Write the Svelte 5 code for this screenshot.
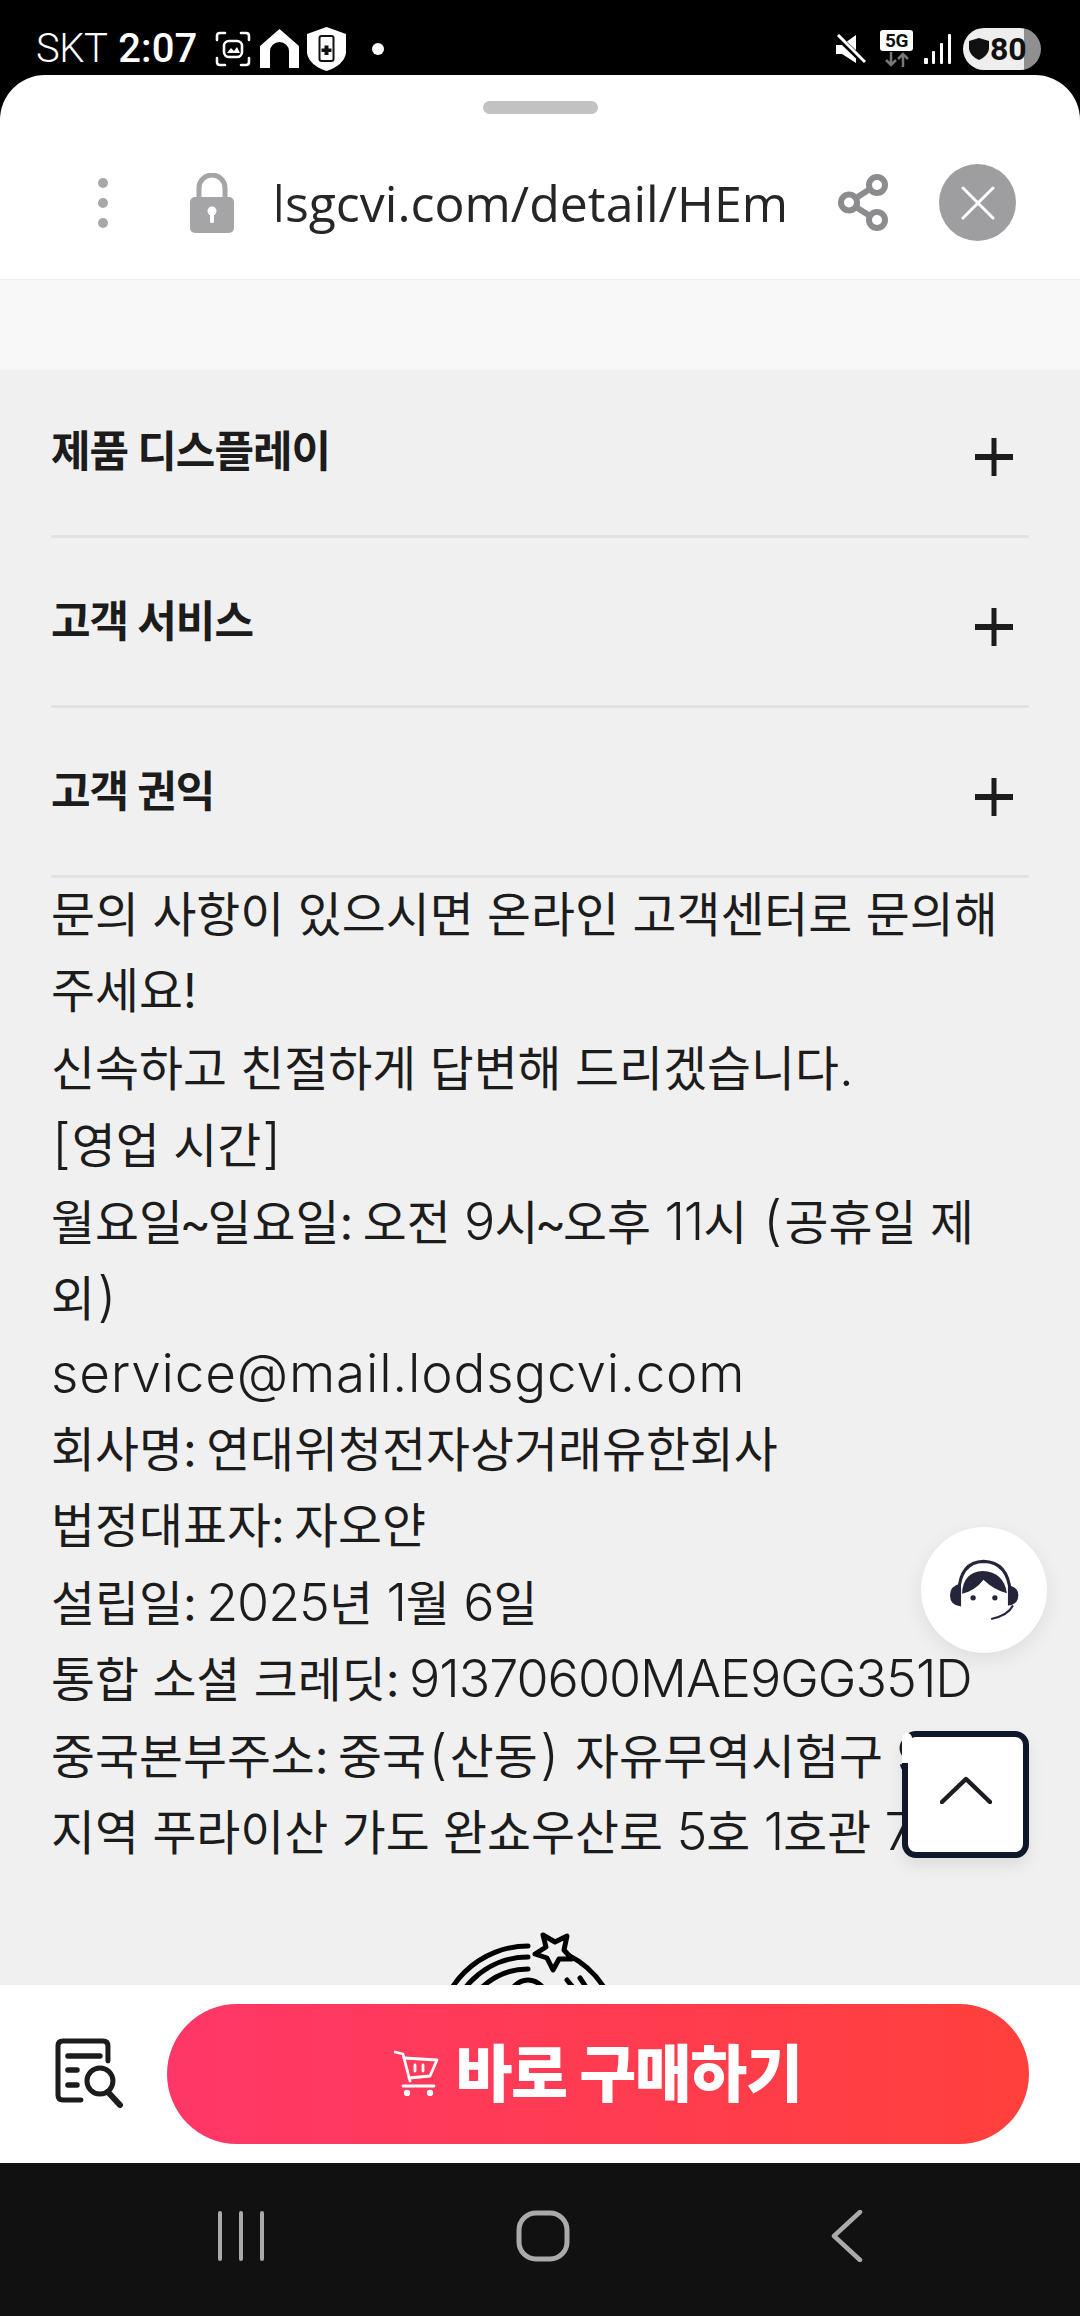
<script lang="ts">
	const sections = ['제품 디스플레이', '고객 서비스', '고객 권익'];

	const lines = [
		'문의 사항이 있으시면 온라인 고객센터로 문의해',
		'주세요!',
		'신속하고 친절하게 답변해 드리겠습니다.',
		'[영업 시간]',
		'월요일~일요일: 오전 9시~오후 11시 (공휴일 제',
		'외)',
		'service@mail.lodsgcvi.com',
		'회사명: 연대위청전자상거래유한회사',
		'법정대표자: 자오얀',
		'설립일: 2025년 1월 6일',
		'통합 소셜 크레딧: 91370600MAE9GG351D',
		'중국본부주소: 중국(산동) 자유무역시험구 9',
		'지역 푸라이산 가도 완쇼우산로 5호 1호관 7'
	];

	// latin runs and punctuation are set apart from the hangul, like the page's font pairing
	const split = (line: string) => line.split(/([A-Za-z0-9@.]+|[()\[\]~:])/).filter(Boolean);
	const kindOf = (part: string) => {
		if (part === ':') return 'colon';
		if (part === '~') return 'tilde';
		if (part === '(' || part === ')') return 'paren';
		if (part === '[' || part === ']') return 'bracket';
		if (/[a-z]/.test(part)) return 'latin word';
		if (/^[A-Z0-9@.]+$/.test(part)) return 'latin';
		return '';
	};
</script>

<div class="page">
	<header class="status">
		<span class="carrier">SKT</span>
		<span class="time">2:07</span>
		<svg class="ic-shot" viewBox="0 0 36 36" width="36" height="36" fill="none" stroke="#fff" stroke-width="2.6" stroke-linecap="round">
			<path d="M2 9V5q0-3 3-3h5M26 2h5q3 0 3 3v4M34 27v4q0 3-3 3h-5M10 34H5q-3 0-3-3v-4" />
			<rect x="9" y="10" width="18" height="16" rx="5" />
			<path d="M12 22l4-5 3 3 3-4 3 6z" fill="#fff" stroke="none" />
		</svg>
		<svg class="ic-home" viewBox="0 0 39 39" width="39" height="39">
			<path d="M19.5 0L39 17V39H29V22a9.5 9 0 0 0-19 0V39H0V17z" fill="#fff" />
		</svg>
		<svg class="ic-shield" viewBox="0 0 39 44" width="39" height="44">
			<path d="M19.5 0L39 7V26Q37 38 19.5 44Q2 38 0 26V7z" fill="#fff" />
			<rect x="12.5" y="9" width="14" height="25" rx="2" fill="none" stroke="#111" stroke-width="2" />
			<path d="M17.5 18.500h4v3h3v3.500h-3v3h-4v-3h-3v-3.500h3z" fill="#111" />
		</svg>
		<span class="dot"></span>
		<span class="spacer"></span>
		<svg class="ic-mute" viewBox="0 0 30 30" width="30" height="30">
			<path d="M0 11h6L20 1V29L6 20H0z" fill="#fff" />
			<path d="M1 2L29 29" stroke="#000" stroke-width="6" />
			<path d="M2 1L29 28" stroke="#fff" stroke-width="3" />
		</svg>
		<span class="net">
			<span class="fiveg">5G</span>
			<svg viewBox="0 0 26 15" width="26" height="15" fill="none" stroke="#777" stroke-width="2.500">
				<path d="M7 0V13M2 8l5 5 5-5M19 15V2M14 7l5-5 5 5" />
			</svg>
		</span>
		<svg class="ic-signal" viewBox="0 0 28 30" width="28" height="30" fill="#fff">
			<rect x="0" y="24" width="4" height="6" rx="1" />
			<rect x="8" y="17" width="3" height="13" rx="1" />
			<rect x="16" y="9" width="3" height="21" rx="1" />
			<rect x="24" y="0" width="3" height="30" rx="1" />
		</svg>
		<span class="battery">
			<svg viewBox="0 0 20 22" width="20" height="22">
				<path d="M10 0L20 3V11Q19 18 10 22Q1 18 0 11V3z" fill="#111" />
			</svg>
			<b>80</b>
		</span>
	</header>

	<div class="sheet">
		<div class="handle"></div>
		<div class="urlbar">
			<svg class="ic-dots" viewBox="0 0 10 50" width="10" height="50" fill="#a8a8aa">
				<circle cx="5" cy="5" r="5" />
				<circle cx="5" cy="25" r="5" />
				<circle cx="5" cy="45" r="5" />
			</svg>
			<svg class="ic-lock" viewBox="0 0 44 60" width="44" height="60">
				<path d="M9 28V15a13 13 0 0 1 26 0V28" fill="none" stroke="#a5a5a8" stroke-width="5" />
				<rect x="0" y="24" width="44" height="36" rx="5" fill="#a5a5a8" />
				<circle cx="22" cy="38" r="4.500" fill="#fff" />
				<rect x="20" y="39" width="4" height="11" rx="1.500" fill="#fff" />
			</svg>
			<div class="url"><span>lodsgcvi.com/detail/HEm</span></div>
			<svg class="ic-share" viewBox="0 0 50 57" width="50" height="57" fill="none" stroke="#8c8c8f" stroke-width="6">
				<circle cx="39" cy="11" r="8" />
				<circle cx="11" cy="28.500" r="8" />
				<circle cx="39" cy="46" r="8" />
				<path d="M32 15L18 24M18 33L32 42" />
			</svg>
			<div class="close">
				<svg viewBox="0 0 34 34" width="34" height="34" stroke="#fff" stroke-width="3" stroke-linecap="round">
					<path d="M2 2L32 32M32 2L2 32" />
				</svg>
			</div>
		</div>

		<div class="content">
			<div class="band"></div>
			<div class="accordion">
				{#each sections as title}
					<div class="row">
						<span class="title">{title}</span>
						<svg class="plus" viewBox="0 0 38 38" width="38" height="38" fill="#1c1c1c">
							<rect x="16.500" y="0" width="5" height="38" />
							<rect x="0" y="16" width="38" height="6" />
						</svg>
					</div>
				{/each}
			</div>
			<div class="body">
				{#each lines as line}
					<div class="line">
						{#each split(line) as part}
							{#if kindOf(part)}<span class={kindOf(part)}>{part}</span>{:else}{part}{/if}
						{/each}
					</div>
				{/each}
			</div>
			<svg class="logo" viewBox="0 0 200 120" width="200" height="120" fill="none" stroke="#000" stroke-width="5" stroke-linecap="round">
				<path d="M10 113A90 90 0 0 1 100 23" />
				<path d="M21 113A79 79 0 0 1 100 34" />
				<path d="M33 113A67 67 0 0 1 100 46" />
				<path d="M82 75A18 18 0 0 1 118 75" />
				<path d="M140 32A90 90 0 0 1 190 113" />
				<path d="M139 57L148 68M152 55L160 67" />
				<path d="M115 12L127 19L139 13L136 27L144 36L131 36L125 47L119 35L107 31L118 24z" fill="#f0f0f0" stroke-linejoin="round" />
			</svg>

			<button type="button" class="agent" aria-label="고객센터">
				<svg viewBox="440 230 230 200" width="77" height="67">
					<path d="M478 335Q482 245 552 243Q625 245 632 335" fill="none" stroke="#24243a" stroke-width="9" />
					<path d="M452 345Q452 315 485 310V378Q452 375 452 345z" fill="#24243a" />
					<path d="M625 315Q656 318 656 345Q656 372 625 375z" fill="#24243a" />
					<path d="M488 340Q490 275 550 272Q612 275 622 338Q585 330 552 298Q528 330 488 340z" fill="#24243a" />
					<circle cx="521" cy="352" r="8" fill="#24243a" />
					<circle cx="586" cy="352" r="8" fill="#24243a" />
					<path d="M640 375Q625 405 575 415" fill="none" stroke="#24243a" stroke-width="6" />
				</svg>
			</button>
			<button type="button" class="totop" aria-label="맨 위로">
				<svg viewBox="0 0 52 28" width="52" height="28" fill="none" stroke="#1c1c24" stroke-width="4.500" stroke-linecap="round" stroke-linejoin="round">
					<path d="M2 26L26 3L50 26" />
				</svg>
			</button>
		</div>

		<div class="buybar">
			<svg class="ic-search" viewBox="50 2035 80 80" width="80" height="80" fill="none" stroke="#1c1c1c" stroke-width="5" stroke-linecap="round">
				<path d="M108 2062V2047q0-5-5-5H63q-5 0-5 5V2096q0 5 5 5H81" />
				<path d="M68 2057H100" stroke-width="5.500" />
				<path d="M68 2071H77M68 2086H77" stroke-width="5.500" />
				<circle cx="100" cy="2082" r="13" />
				<path d="M108 2093L120 2106" stroke-width="6" />
			</svg>
			<button type="button" class="buy">
				<svg class="ic-cart" viewBox="0 0 45 46" width="45" height="46" fill="none" stroke="#fff" stroke-width="2.800" stroke-linecap="round" stroke-linejoin="round">
					<path d="M1 2L9 4L16 31" />
					<path d="M10 8L43 10L36 26L15 28" />
					<path d="M9 36H40" />
					<path d="M21 15V21M29 15V21" />
					<circle cx="13" cy="43" r="1.800" fill="#fff" />
					<circle cx="36" cy="43" r="1.800" fill="#fff" />
				</svg>
				<span class="buy-label">바로 구매하기</span>
			</button>
		</div>
	</div>

	<nav class="navbar">
		<svg viewBox="0 0 46 50" width="46" height="50" class="nav-recent" stroke="#aaa" stroke-width="4" stroke-linecap="round">
			<path d="M2 2V48M23 2V48M44 2V48" />
		</svg>
		<svg viewBox="0 0 54 52" width="54" height="52" class="nav-home" fill="none" stroke="#aaa" stroke-width="5">
			<rect x="3" y="3" width="48" height="46" rx="17" />
		</svg>
		<svg viewBox="0 0 32 52" width="32" height="52" class="nav-back" fill="none" stroke="#aaa" stroke-width="4.500" stroke-linecap="round" stroke-linejoin="round">
			<path d="M29 2L3 26L29 50" />
		</svg>
	</nav>
</div>

<style>
	:global(body) {
		margin: 0;
		background: #000;
	}

	.page {
		width: 1080px;
		height: 2316px;
		display: flex;
		flex-direction: column;
		overflow: hidden;
		background: #000;
		font-family: Inter, 'Noto Sans CJK KR', sans-serif;
	}

	/* status bar */
	.status {
		height: 75px;
		flex-shrink: 0;
		display: flex;
		align-items: center;
		padding: 22px 39px 0 36px;
		box-sizing: border-box;
		color: #fff;
		font-family: Roboto, sans-serif;
	}

	.carrier {
		font-size: 40px;
		font-weight: 300;
		letter-spacing: -0.5px;
	}

	.time {
		font-size: 40px;
		font-weight: 500;
		margin-left: 11px;
	}

	.ic-shot {
		margin-left: 18px;
	}

	.ic-home {
		margin-left: 9px;
	}

	.ic-shield {
		margin-left: 8px;
	}

	.dot {
		width: 12px;
		height: 12px;
		border-radius: 50%;
		background: #fff;
		margin-left: 26px;
	}

	.spacer {
		flex: 1;
	}

	.net {
		display: flex;
		flex-direction: column;
		align-items: center;
		margin-left: 14px;
	}

	.fiveg {
		width: 33px;
		height: 21px;
		border-radius: 3px;
		background: #fff;
		color: #111;
		font-size: 19px;
		font-weight: 700;
		line-height: 21px;
		text-align: center;
		letter-spacing: -0.5px;
	}

	.net svg {
		margin-top: 1px;
	}

	.ic-signal {
		margin-left: 11px;
	}

	.battery {
		width: 78px;
		height: 42px;
		margin-left: 11px;
		border-radius: 21px;
		background: linear-gradient(to right, #eee 0 78%, #8f8f8f 78%);
		color: #111;
		display: flex;
		align-items: center;
		padding-left: 6px;
		box-sizing: border-box;
	}

	.battery b {
		font-size: 32px;
		font-weight: 700;
		margin-left: 1px;
	}

	/* sheet */
	.sheet {
		flex: 1;
		min-height: 0;
		display: flex;
		flex-direction: column;
		background: #fff;
		border-radius: 45px 45px 0 0;
		overflow: hidden;
	}

	.handle {
		width: 115px;
		height: 13px;
		flex-shrink: 0;
		margin: 26px auto 12px;
		border-radius: 7px;
		background: #c2c2c4;
	}

	.urlbar {
		height: 153px;
		flex-shrink: 0;
		display: flex;
		align-items: center;
		padding-left: 98px;
		border-bottom: 1px solid #ececec;
	}

	.ic-lock {
		margin-left: 82px;
	}

	.url {
		width: 511px;
		margin-left: 43px;
		overflow: hidden;
		display: flex;
		justify-content: flex-end;
		font-family: 'Open Sans', sans-serif;
		font-size: 50px;
		line-height: 70px;
		color: #262628;
		white-space: nowrap;
	}

	.ic-share {
		margin-left: 50px;
	}

	.close {
		width: 77px;
		height: 77px;
		margin-left: 51px;
		border-radius: 50%;
		background: #9e9ea1;
		display: flex;
		align-items: center;
		justify-content: center;
	}

	/* scrolling content */
	.content {
		flex: 1;
		min-height: 0;
		position: relative;
		overflow: hidden;
		background: #f0f0f0;
	}

	.band {
		height: 90px;
		margin-bottom: -2px;
		background: #f8f8f8;
	}

	.accordion {
		padding: 0 51px;
	}

	.row {
		height: 167px;
		display: flex;
		align-items: center;
		justify-content: space-between;
		padding-right: 16px;
		border-bottom: 3px solid #e2e2e2;
	}

	.title {
		font-size: 43px;
		font-weight: 700;
		letter-spacing: -1px;
		color: #1c1c1c;
		margin-top: -7px;
	}

	.plus {
		margin-top: 10px;
	}

	.body {
		padding: 0 51px;
		margin-top: -1px;
		font-size: 47.8px;
		font-weight: 400;
		color: #1c1c1c;
		white-space: pre;
	}

	.line {
		height: 76.4px;
		line-height: 76.4px;
	}

	.colon {
		margin-right: -4px;
	}

	.tilde {
		margin: 0 -3.5px;
	}

	.paren {
		font-size: 54px;
		font-weight: 300;
		padding: 0 2.5px;
	}

	.bracket {
		font-size: 54px;
		font-weight: 300;
		padding: 0 1px;
	}

	.latin {
		font-size: 52px;
		font-weight: 350;
		letter-spacing: -1px;
	}

	.latin.word {
		font-size: 53px;
		letter-spacing: 0.8px;
	}

	.logo {
		display: block;
		margin: 53px 0 0 428px;
	}

	.agent {
		position: absolute;
		left: 921px;
		top: 1247px;
		width: 126px;
		height: 126px;
		padding: 0;
		border: 0;
		border-radius: 50%;
		background: #fff;
		box-shadow: 0 6px 20px rgba(0, 0, 0, 0.08);
		display: flex;
		align-items: center;
		justify-content: center;
	}

	.totop {
		position: absolute;
		left: 902px;
		top: 1451px;
		width: 127px;
		height: 127px;
		padding: 0 0 10px;
		box-sizing: border-box;
		border: 6px solid #0f172a;
		border-radius: 14px;
		background: #fff;
		box-shadow: 0 8px 16px rgba(0, 0, 0, 0.08);
		display: flex;
		align-items: center;
		justify-content: center;
	}

	/* white smudge over the button's top left corner in the capture */
	.totop::before {
		content: '';
		position: absolute;
		left: -6px;
		top: -4px;
		width: 10px;
		height: 30px;
		border-radius: 5px 5px 0 0;
		background: #fff;
	}

	/* bottom bar */
	.buybar {
		height: 178px;
		flex-shrink: 0;
		display: flex;
		align-items: center;
		box-sizing: border-box;
		padding: 0 51px 0 50px;
		background: #fff;
	}

	.buy {
		width: 863px;
		height: 140px;
		margin-left: 37px;
		padding: 0;
		border: 0;
		border-radius: 70px;
		background: linear-gradient(to right, #ff3768, #ff403b);
		color: #fff;
		display: flex;
		align-items: center;
		justify-content: center;
		gap: 16px;
		font-family: 'Noto Sans CJK KR', sans-serif;
		font-size: 62px;
		font-weight: 900;
		letter-spacing: -1.5px;
	}

	.buy-label {
		margin-top: -8px;
	}

	.ic-cart {
		margin-top: -2px;
	}

	.navbar {
		height: 153px;
		flex-shrink: 0;
		display: flex;
		align-items: flex-start;
		background: #111;
		padding-top: 47px;
		box-sizing: border-box;
	}

	.nav-recent {
		margin-left: 218px;
		margin-top: 1px;
	}

	.nav-home {
		margin-left: 252px;
	}

	.nav-back {
		margin-left: 261px;
	}
</style>
